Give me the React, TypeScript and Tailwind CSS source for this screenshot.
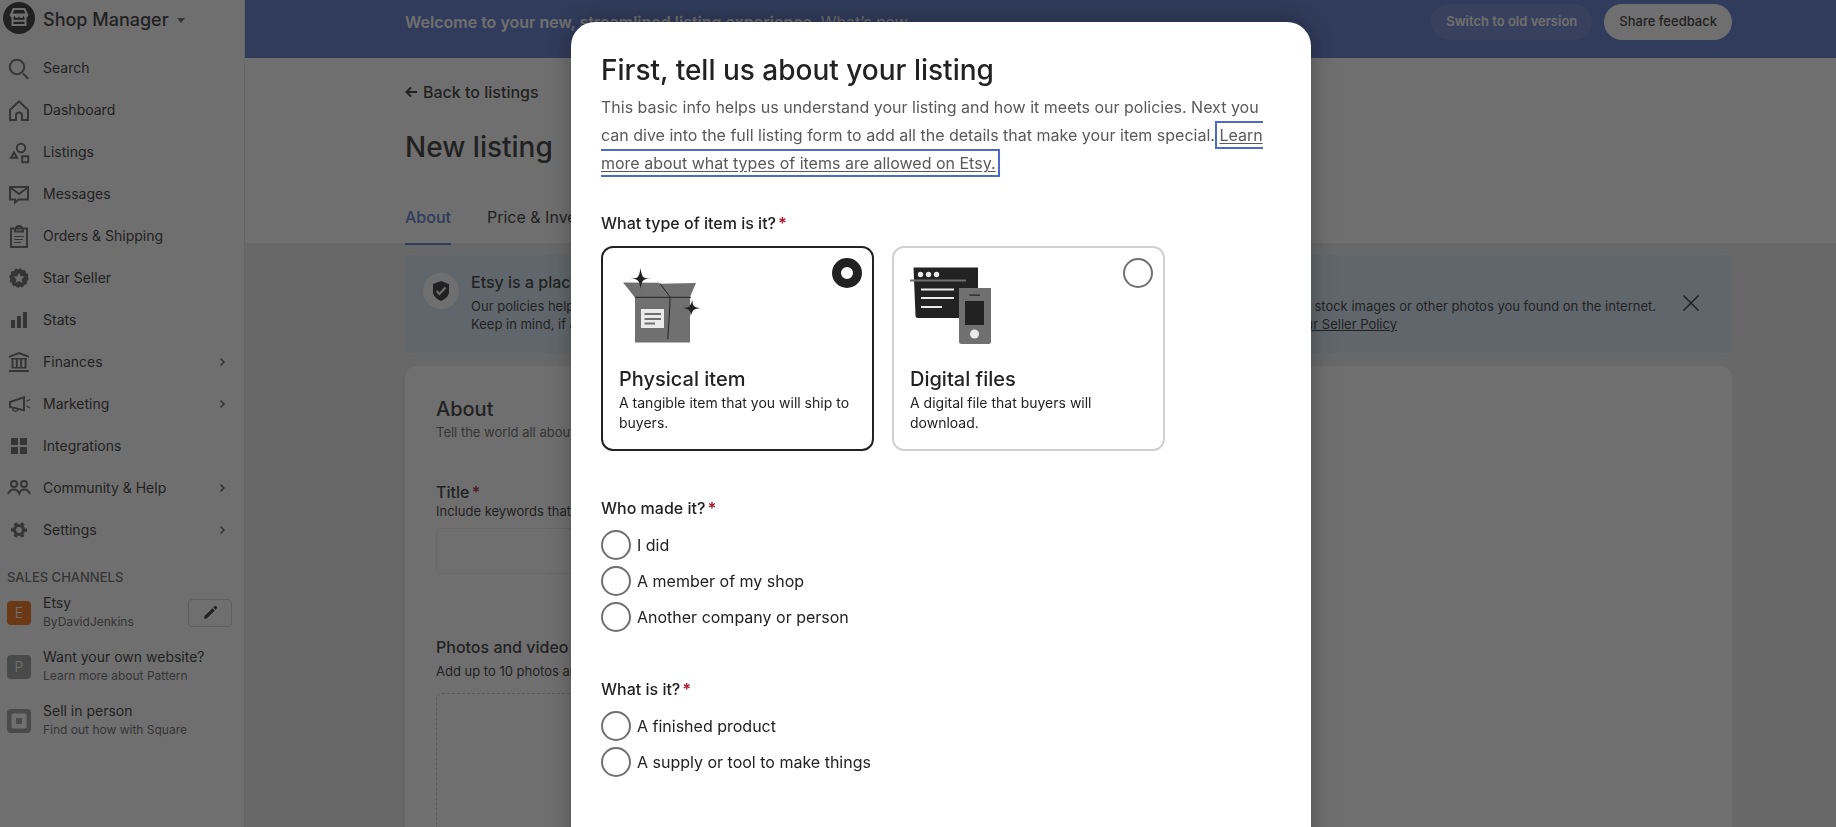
/**
 * New listing page
 *
 * Shop Manager shell with the listing form behind the "tell us about your listing" dialog.
 */

import type { ReactNode } from 'react'
import clsx from 'clsx'

interface NavItem {
  label: string
  icon: ReactNode
  expandable?: boolean
}

const line = { fill: 'none', stroke: 'currentColor', strokeWidth: 2 }

const NAV_ITEMS: NavItem[] = [
  {
    label: 'Search',
    icon: (
      <g {...line}>
        <circle cx="10" cy="11" r="7.2" />
        <path d="M16 17.5l5.2 5.2" />
      </g>
    ),
  },
  {
    label: 'Dashboard',
    icon: (
      <g {...line}>
        <path d="M3 22V12l9-8.7 9 8.7v10h-6v-4.5a3 3 0 0 0-6 0V22z" />
      </g>
    ),
  },
  {
    label: 'Listings',
    icon: (
      <g {...line}>
        <circle cx="14" cy="8" r="4.2" />
        <path d="M4 17.7l3-5.2 3 5.2z" />
        <path d="M15.2 16.2h6v6h-6z" />
      </g>
    ),
  },
  {
    label: 'Messages',
    icon: (
      <g {...line}>
        <path d="M3 5h18v12.5H11.5L8 20.5v-3H3z" />
        <path d="M4 6l8 6 8-6" />
      </g>
    ),
  },
  {
    label: 'Orders & Shipping',
    icon: (
      <g {...line}>
        <path d="M4 4.5h16v18.5H4z" />
        <path d="M8 4.5v3h8v-3" />
        <path d="M9 5a3 3 0 0 1 6 0" />
        <path strokeWidth="1" d="M7 12.5h10M7 15.5h9M7 18.5h7" />
      </g>
    ),
  },
  {
    label: 'Star Seller',
    icon: (
      <g>
        <circle cx="12" cy="12" r="9" fill="currentColor" />
        <circle cx="12" cy="12" r="9" fill="none" stroke="currentColor" strokeWidth="1.4" strokeDasharray="2.4 2.3" />
        <path fill="#fff" d="M12 6.6l1.6 3.6 3.9.4-2.9 2.6.8 3.9-3.4-2-3.4 2 .8-3.9-2.9-2.6 3.9-.4z" />
      </g>
    ),
  },
  {
    label: 'Stats',
    icon: <path fill="currentColor" d="M4 12h4v8H4zM10 8h4v12h-4zM16 4h4v16h-4z" />,
  },
  {
    label: 'Finances',
    expandable: true,
    icon: (
      <g fill="currentColor">
        <path d="M12 2l10 3.7v2L12 4.2 2 7.7v-2zM2 20h20v2H2z" />
        <path d="M4 8h16v1.6H4zM4.5 17h15v1.4h-15zM4.5 9h2v9h-2zM8.8 9h2v9h-2zM13.1 9h2v9h-2zM17.5 9h2v9h-2z" />
      </g>
    ),
  },
  {
    label: 'Marketing',
    expandable: true,
    icon: (
      <g {...line}>
        <path d="M3 10l14-4.7v13L3 15z" />
        <path strokeWidth="1.3" d="M5.5 16.5a3 3 0 0 0 5.5 1.5M19.5 9.5l3.3-2M19.5 14l3.3 2" />
      </g>
    ),
  },
  {
    label: 'Integrations',
    icon: <path fill="currentColor" d="M4 4h7v7H4zM13 4h7v7h-7zM4 13h7v7H4zM13 13h7v7h-7z" />,
  },
  {
    label: 'Community & Help',
    expandable: true,
    icon: (
      <g {...line}>
        <circle cx="7" cy="8" r="3" />
        <circle cx="17" cy="8" r="3" />
        <path d="M1 18c1.2-3 3.4-4.5 6-4.5s4.2 1.5 5.2 4c1-2.5 2.6-4 5-4s4.6 1.5 5.8 4.5" />
      </g>
    ),
  },
  {
    label: 'Settings',
    expandable: true,
    icon: (
      <g fill="none" stroke="currentColor">
        <circle cx="12" cy="12" r="4.5" strokeWidth="3.2" />
        <circle cx="12" cy="12" r="6.8" strokeWidth="2.4" strokeDasharray="3.56 3.56" strokeDashoffset="1.78" />
      </g>
    ),
  },
]

const CHANNELS = [
  { id: 'etsy', title: 'Etsy', subtitle: 'ByDavidJenkins', editable: true },
  { id: 'pattern', title: 'Want your own website?', subtitle: 'Learn more about Pattern', editable: false },
  { id: 'square', title: 'Sell in person', subtitle: 'Find out how with Square', editable: false },
]

const ITEM_TYPES = [
  {
    id: 'physical',
    title: 'Physical item',
    description: 'A tangible item that you will ship to buyers.',
    art: <BoxArt />,
  },
  {
    id: 'digital',
    title: 'Digital files',
    description: 'A digital file that buyers will download.',
    art: <DevicesArt />,
  },
]

function BoxArt() {
  return (
    <svg viewBox="0 0 84 80" className="h-20 w-21" aria-hidden="true">
      <path fill="#707070" d="M4 17.5l36 .2 10 14.5-10-13.5 37-.7-6 14v45.5H16V32.5z" />
      <path stroke="#222" strokeWidth="1" fill="none" d="M16 32.3h56M41 18.5l10 13.5-.2 10-2 32" />
      <path fill="#eaeaea" d="M22 44h23v19H22z" />
      <path stroke="#707070" strokeWidth="2" d="M25.5 49H42M25.5 54H42M25.5 58.5H36" />
      <path fill="#222" d="M21.500 3c.9 6.500 2 8.600 3.300 9.400 1.300.7 3.200.9 7.200 1.200-4 .4-5.900.7-7.200 1.500-1.400 1-2.500 3-3.300 8.900-.8-5.900-1.900-7.900-3.300-8.900-1.300-.8-3.200-1.100-7.200-1.500 4-.3 5.900-.5 7.200-1.200 1.300-.8 2.500-2.900 3.300-9.400z" />
      <path fill="#222" d="M73.200 35c.4 4 1.200 5.700 2.300 6.600 1.200.8 2.800 1.200 5.500 1.600-2.700.3-4.700.7-5.900 1.500-1.200.9-2.400 2.700-3.300 6.300-.3-3.500-.9-5.200-2.100-6.200-1.200-.9-3.100-1.500-5.700-1.800 3-.3 4.900-.6 6.200-1.600 1.100-.9 2.100-2.700 3-6.400z" />
    </svg>
  )
}

function DevicesArt() {
  return (
    <svg viewBox="0 0 84 80" className="h-20 w-21" aria-hidden="true">
      <path fill="#222" d="M3.5 2.5H68V53H8a2.5 2.5 0 0 1-2.5-2.5z" />
      <circle cx="10.5" cy="9.5" r="2.7" fill="#eaeaea" />
      <circle cx="18.5" cy="9.5" r="2.7" fill="#eaeaea" />
      <circle cx="26.5" cy="9.5" r="2.7" fill="#eaeaea" />
      <path stroke="#707070" strokeWidth="2" d="M0 15.5h56" />
      <path stroke="#eaeaea" strokeWidth="2" d="M11 24.5h33M11 33h33M11 42h21" />
      <path fill="#707070" d="M49 23h32v53.5a2.5 2.5 0 0 1-2.5 2.5h-27a2.5 2.5 0 0 1-2.5-2.5z" />
      <path fill="#222" d="M55 36h19v24H55zM59.5 29.5H70v1.2H59.5z" />
      <circle cx="64.5" cy="69" r="4.5" fill="#eaeaea" />
    </svg>
  )
}

function ShopLogo() {
  return (
    <svg viewBox="0 0 32 32" className="size-8" aria-hidden="true">
      <circle cx="16" cy="16" r="16" fill="#222" />
      <g fill="none" stroke="#fff" strokeWidth="2">
        <path d="M10.5 7h11L24 12.5H8z" />
        <path d="M9.5 15v8h13v-8" />
        <path d="M9 18.8h14" />
      </g>
      <path
        fill="#fff"
        d="M7 12h18a2.25 2.8 0 0 1-4.5 1.5 2.25 2.5 0 0 1-4.5 0 2.25 2.5 0 0 1-4.5 0A2.25 2.8 0 0 1 7 12z"
      />
    </svg>
  )
}

function ChannelBadge({ id }: { id: string }) {
  if (id === 'square') {
    return (
      <svg viewBox="0 0 24 24" className="mt-2 size-6 shrink-0" aria-hidden="true">
        <rect width="24" height="24" rx="4" fill="#959595" />
        <rect x="4.5" y="4.5" width="15" height="15" rx="2" fill="#fff" />
        <rect x="9" y="9" width="6" height="6" fill="#959595" />
      </svg>
    )
  }
  return (
    <span
      className={clsx(
        'mt-2 flex size-6 shrink-0 items-center justify-center rounded text-sm font-light text-white',
        id === 'etsy' ? 'bg-[#f56400]' : 'bg-[#959595]',
      )}
    >
      {id === 'etsy' ? 'E' : 'P'}
    </span>
  )
}

function Sidebar() {
  return (
    <aside className="w-[245px] shrink-0 border-r border-[#e1e1e1] bg-white text-[#222]">
      <button type="button" className="flex h-[47px] items-start gap-2 pt-0.5 pl-[3px]">
        <ShopLogo />
        <span className="flex h-9 items-center gap-2 text-lg font-medium">
          Shop Manager
          <svg viewBox="0 0 8 5" className="h-[5px] w-2" aria-hidden="true">
            <path fill="#595959" d="M0 0h8L4 5z" />
          </svg>
        </span>
      </button>

      <nav>
        {NAV_ITEMS.map((item) => (
          <a key={item.label} href="#" className="flex h-[42px] items-center gap-3 pr-[18px] pl-[7px]">
            <svg viewBox="0 0 24 24" className="size-6 text-[#595959]" aria-hidden="true">
              {item.icon}
            </svg>
            <span className="flex-1 text-sm">{item.label}</span>
            {item.expandable && (
              <svg viewBox="0 0 8 8" className="size-2" aria-hidden="true">
                <path fill="none" stroke="#595959" strokeWidth="1.5" d="M2.5.5L6 4 2.5 7.5" />
              </svg>
            )}
          </a>
        ))}
      </nav>

      <h2 className="mt-4 pl-[7px] text-[13px] leading-5 font-medium text-[#595959]">SALES CHANNELS</h2>
      <ul className="mt-1.5">
        {CHANNELS.map((channel) => (
          <li key={channel.id} className="flex h-[54px] items-start gap-3 pr-3 pl-[7px]">
            <ChannelBadge id={channel.id} />
            <a href="#" className="flex-1">
              <span className="block text-sm leading-5">{channel.title}</span>
              <span className="block text-xs leading-[18px] text-[#595959]">{channel.subtitle}</span>
            </a>
            {channel.editable && (
              <button
                type="button"
                aria-label="Edit shop"
                className="mt-1.5 flex h-7 w-11 items-center justify-center rounded-sm border border-[#d0d0d0]"
              >
                <svg viewBox="0 0 14 14" className="size-3.5" aria-hidden="true">
                  <path fill="#222" d="M1 13l.6-3L9.5 2.2l2.3 2.3L4 12.3zM10.3 1.4l.9-.9a1.6 1.6 0 0 1 2.3 2.3l-.9.9z" />
                </svg>
              </button>
            )}
          </li>
        ))}
      </ul>
    </aside>
  )
}

function Required() {
  return <span className="ml-0.5 font-bold text-[#a61a2e]">*</span>
}

function ListingPage() {
  return (
    <main className="min-w-0 flex-1 bg-[#eaeaea] text-[#222]">
      <div className="flex h-[58px] items-start justify-between bg-[#4d6bc6] pt-1 pr-[104px] pl-40 text-white">
        <p className="text-base leading-9 font-semibold">
          Welcome to your new, streamlined listing experience.{' '}
          <a href="#" className="font-normal">
            What’s new
          </a>
        </p>
        <div className="flex gap-3 text-[13px]">
          <button type="button" className="h-9 rounded-full bg-white/10 px-[15px] font-semibold">
            Switch to old version
          </button>
          <button type="button" className="h-9 rounded-full bg-white px-[15px] font-medium text-[#222]">
            Share feedback
          </button>
        </div>
      </div>

      <header className="bg-white pt-6 pr-[104px] pl-40">
        <a href="#" className="flex items-center gap-1.5 text-base leading-5 font-medium">
          <svg viewBox="0 0 12 12" className="size-3" aria-hidden="true">
            <path fill="none" stroke="#222" strokeWidth="2" d="M12 6H1.5M6 1.5L1.5 6 6 10.5" />
          </svg>
          Back to listings
        </a>
        <h1 className="mt-[27px] text-[28px] leading-9 font-medium">New listing</h1>
        <div className="mt-8 flex gap-9 text-base leading-5">
          <a href="#" className="-mb-0.5 border-b-2 border-[#4d6bc6] pt-2.5 pb-4 font-medium text-[#4d6bc6]">
            About
          </a>
          <a href="#" className="pt-2.5">
            Price &amp; Inventory
          </a>
        </div>
      </header>

      <div className="pt-3 pr-[104px] pl-40">
        <section className="flex h-[98px] items-start rounded-md bg-[#d7e6f5] pt-[18px] pr-[33px] pl-[18px]">
          <span className="flex size-9 shrink-0 items-center justify-center rounded-full bg-white">
            <svg viewBox="0 0 16 20" className="h-5 w-4" aria-hidden="true">
              <path fill="#222" d="M8 0l8 3v8c0 4-3.5 7-8 9-4.5-2-8-5-8-9V3z" />
              <path fill="none" stroke="#fff" strokeWidth="2" d="M3.5 10l3 3 6-6.5" />
            </svg>
          </span>
          <div className="ml-3 min-w-0 flex-1 text-[13px] leading-[18px]">
            <h2 className="mb-1.5 text-base leading-[18px] font-medium">Etsy is a place for creative people</h2>
            <p className="flex justify-between pr-[27px]">
              <span>Our policies help keep our marketplace unique.</span>
              <span>Please do not use stock images or other photos you found on the internet.</span>
            </p>
            <p className="flex justify-between pr-[286px]">
              <span>Keep in mind, if an item breaks our rules it may be removed.</span>
              <a href="#" className="underline">
                Read our Seller Policy
              </a>
            </p>
          </div>
          <button type="button" aria-label="Dismiss" className="mt-[22px]">
            <svg viewBox="0 0 16 16" className="size-4" aria-hidden="true">
              <path stroke="#222" strokeWidth="1.5" d="M.5.5l15 15M15.5.5l-15 15" />
            </svg>
          </button>
        </section>

        <section className="mt-[13px] min-h-[640px] rounded-xl bg-white px-[31px] pt-[29px]">
          <h2 className="text-xl leading-7 font-medium">About</h2>
          <p className="text-[13px] leading-[18px] text-[#595959]">Tell the world all about your item.</p>
          <label htmlFor="title" className="mt-[41px] block text-base leading-5 font-medium">
            Title
            <Required />
          </label>
          <p className="text-[13px] leading-[18px]">Include keywords that buyers would search.</p>
          <input id="title" className="mt-2 h-[46px] w-full max-w-200 rounded-md border border-[#ececec]" />
          <h3 className="mt-[63px] text-base leading-5 font-medium">Photos and video</h3>
          <p className="mt-1 text-[13px] leading-5">Add up to 10 photos and 1 video.</p>
          <div className="mt-3 h-60 max-w-200 rounded-md border border-dashed border-[#c4c4c4]" />
        </section>
      </div>
    </main>
  )
}

const radioClass =
  'size-[30px] shrink-0 appearance-none rounded-full border-2 border-[#707070] bg-white checked:border-[9px] checked:border-[#222]'

interface RadioGroupProps {
  name: string
  legend: string
  options: string[]
}

function RadioGroup({ name, legend, options }: RadioGroupProps) {
  return (
    <fieldset className="mt-[45px]">
      <legend className="text-base leading-6 font-medium">
        {legend}
        <Required />
      </legend>
      <div className="mt-2.5 flex flex-col items-start gap-1.5">
        {options.map((option) => (
          <label key={option} className="flex items-center gap-1.5 text-base">
            <input type="radio" name={name} className={radioClass} />
            {option}
          </label>
        ))}
      </div>
    </fieldset>
  )
}

function ListingDialog() {
  return (
    <div
      role="dialog"
      aria-labelledby="dialog-title"
      className="w-[740px] rounded-3xl bg-white px-[30px] pt-[30px] pb-24 text-[#222] shadow-[0_0_24px_rgba(0,0,0,0.3)]"
    >
      <h1 id="dialog-title" className="text-[28px] leading-9 font-medium">
        First, tell us about your listing
      </h1>
      <p className="mt-[5px] text-base leading-7 text-[#595959]">
        This basic info helps us understand your listing and how it meets our policies. Next you can dive into the full
        listing form to add all the details that make your item special.{' '}
        <a href="#" className="underline underline-offset-2 shadow-[0_0_0_2px_#fff,0_0_0_4px_#4d6bc6]">
          Learn more about what types of items are allowed on Etsy.
        </a>
      </p>

      <fieldset className="mt-[34px]">
        <legend className="text-base leading-6 font-medium">
          What type of item is it?
          <Required />
        </legend>
        <div className="mt-[11px] flex gap-[18px]">
          {ITEM_TYPES.map((type) => (
            <label
              key={type.id}
              className="flex h-[205px] w-[273px] flex-col rounded-xl border-2 border-[#d0d0d0] p-4 has-checked:border-[#222]"
            >
              <span className="-mt-1.5 -mr-1.5 flex items-start justify-between">
                <span className="pt-[7px]">{type.art}</span>
                <input
                  type="radio"
                  name="item-type"
                  defaultChecked={type.id === 'physical'}
                  className={radioClass}
                />
              </span>
              <span className="mt-5 text-xl leading-7 font-medium">{type.title}</span>
              <span className="text-sm leading-5">{type.description}</span>
            </label>
          ))}
        </div>
      </fieldset>

      <RadioGroup
        name="maker"
        legend="Who made it?"
        options={['I did', 'A member of my shop', 'Another company or person']}
      />
      <RadioGroup name="kind" legend="What is it?" options={['A finished product', 'A supply or tool to make things']} />
    </div>
  )
}

export default function App() {
  return (
    <div className="h-screen overflow-hidden font-['Inter',sans-serif]">
      <div className="flex min-h-full">
        <Sidebar />
        <ListingPage />
      </div>
      <div className="fixed inset-0 flex items-start justify-center overflow-hidden bg-[#222]/65 pt-[22px] pl-[46px]">
        <ListingDialog />
      </div>
    </div>
  )
}
